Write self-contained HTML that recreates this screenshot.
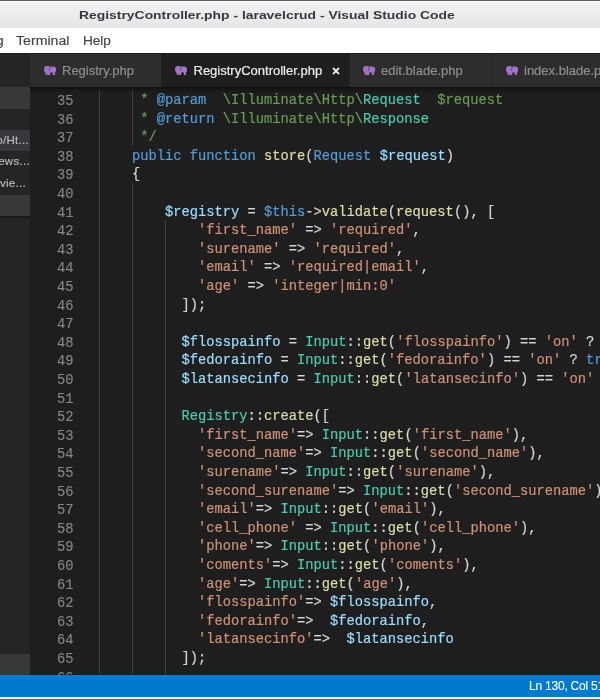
<!DOCTYPE html>
<html><head><meta charset="utf-8">
<style>
*{margin:0;padding:0;box-sizing:border-box}
html,body{width:600px;height:700px;overflow:hidden;background:#1e1e1e;font-family:"Liberation Sans",sans-serif}
body>div{will-change:transform}
.abs{position:absolute}
#title{position:absolute;left:0;top:0;width:600px;height:28px;background:linear-gradient(#fafafa 0,#f2f2f2 1.5px,#e5e5e5 100%);border-top:1px solid #606060}
#title .t{position:absolute;left:79px;top:0;font-weight:bold;font-size:11.3px;color:#363a3e;line-height:29px;white-space:nowrap;transform-origin:0 0;transform:scaleX(1.23)}
#menu{position:absolute;left:0;top:28px;width:600px;height:25px;background:#ffffff}
#menu span{position:absolute;-webkit-text-stroke:0.15px currentColor;top:1px;font-size:12px;line-height:25px;color:#454545;white-space:nowrap}
#side{position:absolute;left:0;top:53px;width:30px;height:622px;background:#252526;overflow:hidden;border-top:1px solid #1b1b1b}
.sh{position:absolute;left:0;width:30px;background:#383838}
.srow{position:absolute;left:0;width:30px;height:21.5px;font-size:11.5px;color:#bdbdbd;line-height:21.5px;white-space:nowrap;overflow:hidden}
.srow span{position:absolute;-webkit-text-stroke:0.15px currentColor;top:0;letter-spacing:0.3px}
#tabs{position:absolute;left:30px;top:53px;width:570px;height:34px;background:#252526;border-top:1px solid #1b1b1b}
.tab{position:absolute;top:0;height:33px;background:#2d2d2d;border-right:1px solid #252526}
.tab .ic{position:absolute;top:12.2px}
.tab .tx{position:absolute;-webkit-text-stroke:0.2px currentColor;top:0;font-size:13px;line-height:33px;color:#8e8e8e;white-space:nowrap}
.tab.act{background:#1e1e1e}
.tab.act .tx{color:#ececec}
#editor{position:absolute;left:30px;top:87px;width:570px;height:588px;background:#1e1e1e;overflow:hidden}
.l{position:absolute;-webkit-text-stroke:0.2px currentColor;left:69px;height:18.6px;line-height:18.6px;font-family:"Liberation Mono",monospace;font-size:13.75px;color:#d4d4d4;white-space:pre}
.n{position:absolute;-webkit-text-stroke:0.15px currentColor;left:0;width:43.6px;text-align:right;height:18.6px;line-height:18.6px;font-family:"Liberation Mono",monospace;font-size:13.75px;color:#858585}
.g{position:absolute;width:1px;background:#404040}
#status{position:absolute;left:0;top:675px;width:600px;height:22px;background:#007acc}
#status .st{position:absolute;-webkit-text-stroke:0.1px currentColor;left:529px;top:0;font-size:12px;letter-spacing:-0.22px;line-height:22px;color:#ffffff;white-space:nowrap}
#bot{position:absolute;left:0;top:697px;width:600px;height:3px;background:#ececec;border-bottom:1px solid #6a6a6a}
</style></head><body>
<div id="title"><div class="t">RegistryController.php - laravelcrud - Visual Studio Code</div></div>
<div id="menu"><span style="left:-37px;transform-origin:0 0;transform:scaleX(1.15)">Debug</span><span style="left:16px;transform-origin:0 0;transform:scaleX(1.18)">Terminal</span><span style="left:83px;transform-origin:0 0;transform:scaleX(1.13)">Help</span></div>
<div id="side">
  <div class="sh" style="top:32.8px;height:22px"></div>
  <div class="srow" style="top:75.8px;background:#37373d"><span style="right:1px">p/Ht...</span></div>
  <div class="srow" style="top:97.3px"><span style="right:0px">ews...</span></div>
  <div class="srow" style="top:118.8px"><span style="right:4px">/vie...</span></div>
  <div class="sh" style="top:140.8px;height:21px;box-shadow:0 2px 2px #1a1a1a"></div>
  <div class="sh" style="top:599.7px;height:21px"></div>
</div>
<div id="tabs">
  <div class="tab" style="left:0;width:132px">
    <svg class="ic" style="left:13.8px" width="12.3" height="9.1" viewBox="0 0 12.3 9.1"><path fill="#a074c4" d="M2.6 0C1 0 0 1.4 0 3.2C0 4.8 .8 6.2 1.8 7.4L1.8 9L3.7 9L3.8 7.2L4 7.2L4 9L6.2 9L6.3 6.4L8.8 6.4L8.8 9.1L11 9.1L11.1 6.6C11.9 5.6 12.3 4.6 12.3 3.5C12.3 1.5 10.8 .4 8.8 .4C7.6 .4 6.8 .6 6.3 .8C5.6 .3 4.4 0 2.6 0Z"/><path d="M6.2 1C6 2.5 5.6 3.8 5 4.9" stroke="#4a3560" stroke-width="0.7" fill="none"/></svg>
    <div class="tx" style="left:32px">Registry.php</div>
  </div>
  <div class="tab act" style="left:131px;width:189px">
    <svg class="ic" style="left:13.8px" width="12.3" height="9.1" viewBox="0 0 12.3 9.1"><path fill="#a074c4" d="M2.6 0C1 0 0 1.4 0 3.2C0 4.8 .8 6.2 1.8 7.4L1.8 9L3.7 9L3.8 7.2L4 7.2L4 9L6.2 9L6.3 6.4L8.8 6.4L8.8 9.1L11 9.1L11.1 6.6C11.9 5.6 12.3 4.6 12.3 3.5C12.3 1.5 10.8 .4 8.8 .4C7.6 .4 6.8 .6 6.3 .8C5.6 .3 4.4 0 2.6 0Z"/><path d="M6.2 1C6 2.5 5.6 3.8 5 4.9" stroke="#4a3560" stroke-width="0.7" fill="none"/></svg>
    <div class="tx" style="left:32.5px">RegistryController.php</div>
    <svg class="abs" style="left:170.7px;top:13px" width="8" height="8" viewBox="0 0 8 8"><path d="M1 1L7 7M7 1L1 7" stroke="#e8e8e8" stroke-width="1.8"/></svg>
  </div>
  <div class="tab" style="left:319.5px;width:142px">
    <svg class="ic" style="left:13.8px" width="12.3" height="9.1" viewBox="0 0 12.3 9.1"><path fill="#a074c4" d="M2.6 0C1 0 0 1.4 0 3.2C0 4.8 .8 6.2 1.8 7.4L1.8 9L3.7 9L3.8 7.2L4 7.2L4 9L6.2 9L6.3 6.4L8.8 6.4L8.8 9.1L11 9.1L11.1 6.6C11.9 5.6 12.3 4.6 12.3 3.5C12.3 1.5 10.8 .4 8.8 .4C7.6 .4 6.8 .6 6.3 .8C5.6 .3 4.4 0 2.6 0Z"/><path d="M6.2 1C6 2.5 5.6 3.8 5 4.9" stroke="#4a3560" stroke-width="0.7" fill="none"/></svg>
    <div class="tx" style="left:31.5px">edit.blade.php</div>
  </div>
  <div class="tab" style="left:462px;width:140px">
    <svg class="ic" style="left:13.8px" width="12.3" height="9.1" viewBox="0 0 12.3 9.1"><path fill="#a074c4" d="M2.6 0C1 0 0 1.4 0 3.2C0 4.8 .8 6.2 1.8 7.4L1.8 9L3.7 9L3.8 7.2L4 7.2L4 9L6.2 9L6.3 6.4L8.8 6.4L8.8 9.1L11 9.1L11.1 6.6C11.9 5.6 12.3 4.6 12.3 3.5C12.3 1.5 10.8 .4 8.8 .4C7.6 .4 6.8 .6 6.3 .8C5.6 .3 4.4 0 2.6 0Z"/><path d="M6.2 1C6 2.5 5.6 3.8 5 4.9" stroke="#4a3560" stroke-width="0.7" fill="none"/></svg>
    <div class="tx" style="left:32px">index.blade.php</div>
  </div>
</div>
<div id="editor">
<div class="g" style="left:69.00px;top:3.00px;height:595.20px"></div>
<div class="g" style="left:102.00px;top:3.00px;height:55.80px"></div>
<div class="g" style="left:102.00px;top:96.00px;height:502.20px"></div>
<div class="g" style="left:135.00px;top:133.20px;height:465.00px"></div>
<div class="n" style="top:6.00px">35</div>
<div class="n" style="top:24.60px">36</div>
<div class="n" style="top:43.20px">37</div>
<div class="n" style="top:61.80px">38</div>
<div class="n" style="top:80.40px">39</div>
<div class="n" style="top:99.00px">40</div>
<div class="n" style="top:117.60px">41</div>
<div class="n" style="top:136.20px">42</div>
<div class="n" style="top:154.80px">43</div>
<div class="n" style="top:173.40px">44</div>
<div class="n" style="top:192.00px">45</div>
<div class="n" style="top:210.60px">46</div>
<div class="n" style="top:229.20px">47</div>
<div class="n" style="top:247.80px">48</div>
<div class="n" style="top:266.40px">49</div>
<div class="n" style="top:285.00px">50</div>
<div class="n" style="top:303.60px">51</div>
<div class="n" style="top:322.20px">52</div>
<div class="n" style="top:340.80px">53</div>
<div class="n" style="top:359.40px">54</div>
<div class="n" style="top:378.00px">55</div>
<div class="n" style="top:396.60px">56</div>
<div class="n" style="top:415.20px">57</div>
<div class="n" style="top:433.80px">58</div>
<div class="n" style="top:452.40px">59</div>
<div class="n" style="top:471.00px">60</div>
<div class="n" style="top:489.60px">61</div>
<div class="n" style="top:508.20px">62</div>
<div class="n" style="top:526.80px">63</div>
<div class="n" style="top:545.40px">64</div>
<div class="n" style="top:564.00px">65</div>
<div class="n" style="top:582.60px">66</div>
<div class="l" style="top:-13.60px"></div>
<div class="l" style="top:5.00px"><span style="color:#6a9955">     * </span><span style="color:#569cd6">@param</span><span style="color:#6a9955">  \Illuminate\Http\</span><span style="color:#4ec9b0">Request</span><span style="color:#6a9955">  $request</span></div>
<div class="l" style="top:23.60px"><span style="color:#6a9955">     * </span><span style="color:#569cd6">@return</span><span style="color:#6a9955"> \Illuminate\Http\</span><span style="color:#4ec9b0">Response</span></div>
<div class="l" style="top:42.20px"><span style="color:#6a9955">     */</span></div>
<div class="l" style="top:60.80px">    <span style="color:#569cd6">public</span> <span style="color:#569cd6">function</span> <span style="color:#dcdcaa">store</span>(<span style="color:#569cd6">Request</span> <span style="color:#9cdcfe">$request</span>)</div>
<div class="l" style="top:79.40px">    {</div>
<div class="l" style="top:98.00px"></div>
<div class="l" style="top:116.60px">        <span style="color:#9cdcfe">$registry</span> = <span style="color:#569cd6">$this</span>-&gt;<span style="color:#dcdcaa">validate</span>(<span style="color:#dcdcaa">request</span>(), [</div>
<div class="l" style="top:135.20px">            <span style="color:#ce9178">&#x27;first_name&#x27;</span> =&gt; <span style="color:#ce9178">&#x27;required&#x27;</span>,</div>
<div class="l" style="top:153.80px">            <span style="color:#ce9178">&#x27;surename&#x27;</span> =&gt; <span style="color:#ce9178">&#x27;required&#x27;</span>,</div>
<div class="l" style="top:172.40px">            <span style="color:#ce9178">&#x27;email&#x27;</span> =&gt; <span style="color:#ce9178">&#x27;required|email&#x27;</span>,</div>
<div class="l" style="top:191.00px">            <span style="color:#ce9178">&#x27;age&#x27;</span> =&gt; <span style="color:#ce9178">&#x27;integer|min:0&#x27;</span></div>
<div class="l" style="top:209.60px">          ]);</div>
<div class="l" style="top:228.20px"></div>
<div class="l" style="top:246.80px">          <span style="color:#9cdcfe">$flosspainfo</span> = <span style="color:#4ec9b0">Input</span>::<span style="color:#dcdcaa">get</span>(<span style="color:#ce9178">&#x27;flosspainfo&#x27;</span>) == <span style="color:#ce9178">&#x27;on&#x27;</span> ? <span style="color:#569cd6">true</span> : <span style="color:#569cd6">false</span>;</div>
<div class="l" style="top:265.40px">          <span style="color:#9cdcfe">$fedorainfo</span> = <span style="color:#4ec9b0">Input</span>::<span style="color:#dcdcaa">get</span>(<span style="color:#ce9178">&#x27;fedorainfo&#x27;</span>) == <span style="color:#ce9178">&#x27;on&#x27;</span> ? <span style="color:#569cd6">true</span> : <span style="color:#569cd6">false</span>;</div>
<div class="l" style="top:284.00px">          <span style="color:#9cdcfe">$latansecinfo</span> = <span style="color:#4ec9b0">Input</span>::<span style="color:#dcdcaa">get</span>(<span style="color:#ce9178">&#x27;latansecinfo&#x27;</span>) == <span style="color:#ce9178">&#x27;on&#x27;</span> ? <span style="color:#569cd6">true</span> : <span style="color:#569cd6">false</span>;</div>
<div class="l" style="top:302.60px"></div>
<div class="l" style="top:321.20px">          <span style="color:#4ec9b0">Registry</span>::<span style="color:#dcdcaa">create</span>([</div>
<div class="l" style="top:339.80px">            <span style="color:#ce9178">&#x27;first_name&#x27;</span>=&gt; <span style="color:#4ec9b0">Input</span>::<span style="color:#dcdcaa">get</span>(<span style="color:#ce9178">&#x27;first_name&#x27;</span>),</div>
<div class="l" style="top:358.40px">            <span style="color:#ce9178">&#x27;second_name&#x27;</span>=&gt; <span style="color:#4ec9b0">Input</span>::<span style="color:#dcdcaa">get</span>(<span style="color:#ce9178">&#x27;second_name&#x27;</span>),</div>
<div class="l" style="top:377.00px">            <span style="color:#ce9178">&#x27;surename&#x27;</span>=&gt; <span style="color:#4ec9b0">Input</span>::<span style="color:#dcdcaa">get</span>(<span style="color:#ce9178">&#x27;surename&#x27;</span>),</div>
<div class="l" style="top:395.60px">            <span style="color:#ce9178">&#x27;second_surename&#x27;</span>=&gt; <span style="color:#4ec9b0">Input</span>::<span style="color:#dcdcaa">get</span>(<span style="color:#ce9178">&#x27;second_surename&#x27;</span>),</div>
<div class="l" style="top:414.20px">            <span style="color:#ce9178">&#x27;email&#x27;</span>=&gt; <span style="color:#4ec9b0">Input</span>::<span style="color:#dcdcaa">get</span>(<span style="color:#ce9178">&#x27;email&#x27;</span>),</div>
<div class="l" style="top:432.80px">            <span style="color:#ce9178">&#x27;cell_phone&#x27;</span> =&gt; <span style="color:#4ec9b0">Input</span>::<span style="color:#dcdcaa">get</span>(<span style="color:#ce9178">&#x27;cell_phone&#x27;</span>),</div>
<div class="l" style="top:451.40px">            <span style="color:#ce9178">&#x27;phone&#x27;</span>=&gt; <span style="color:#4ec9b0">Input</span>::<span style="color:#dcdcaa">get</span>(<span style="color:#ce9178">&#x27;phone&#x27;</span>),</div>
<div class="l" style="top:470.00px">            <span style="color:#ce9178">&#x27;coments&#x27;</span>=&gt; <span style="color:#4ec9b0">Input</span>::<span style="color:#dcdcaa">get</span>(<span style="color:#ce9178">&#x27;coments&#x27;</span>),</div>
<div class="l" style="top:488.60px">            <span style="color:#ce9178">&#x27;age&#x27;</span>=&gt; <span style="color:#4ec9b0">Input</span>::<span style="color:#dcdcaa">get</span>(<span style="color:#ce9178">&#x27;age&#x27;</span>),</div>
<div class="l" style="top:507.20px">            <span style="color:#ce9178">&#x27;flosspainfo&#x27;</span>=&gt; <span style="color:#9cdcfe">$flosspainfo</span>,</div>
<div class="l" style="top:525.80px">            <span style="color:#ce9178">&#x27;fedorainfo&#x27;</span>=&gt;  <span style="color:#9cdcfe">$fedorainfo</span>,</div>
<div class="l" style="top:544.40px">            <span style="color:#ce9178">&#x27;latansecinfo&#x27;</span>=&gt;  <span style="color:#9cdcfe">$latansecinfo</span></div>
<div class="l" style="top:563.00px">          ]);</div>
<div class="l" style="top:581.60px"></div>
<div style="position:absolute;left:0;top:0;width:570px;height:6px;box-shadow:#000 0 6px 6px -6px inset"></div>
</div>
<div id="status"><div class="st">Ln 130, Col 51</div></div>
<div id="bot"></div>
</body></html>
